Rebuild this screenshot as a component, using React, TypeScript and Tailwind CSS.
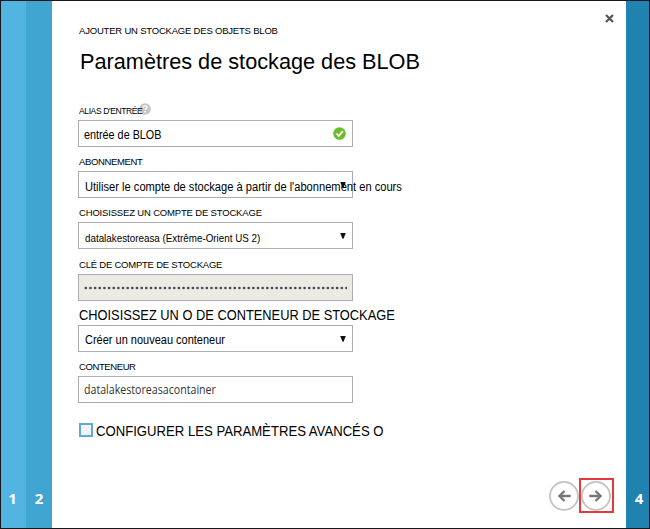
import type { ReactNode } from "react";

const arial = "font-['Liberation_Sans',Arial,sans-serif]";

function Field({ label, className, children }: { label: ReactNode; className: string; children: ReactNode }) {
  return (
    <div className={`flex flex-col justify-end ${className}`}>
      <div className="flex h-[14px] items-center whitespace-nowrap pl-px">{label}</div>
      <div className="mt-[2px]">{children}</div>
    </div>
  );
}

function Box({ className = "bg-white", children }: { className?: string; children: ReactNode }) {
  return (
    <div className={`flex h-[27px] w-[275px] items-center justify-between whitespace-nowrap border border-[#adadad] pl-[6px] pr-[5px] ${className}`}>
      {children}
    </div>
  );
}

function Arrow() {
  return (
    <svg className="mt-px mr-px h-[6px] w-[6px] shrink-0" viewBox="0 0 6 6">
      <path d="M.2 0h5.6L3.5 5.8h-1z" fill="#111" />
    </svg>
  );
}

function RoundArrow({ flip = false }: { flip?: boolean }) {
  return (
    <svg className={`h-[30px] w-[30px] shrink-0 ${flip ? "-scale-x-100" : ""}`} viewBox="0 0 30 30" fill="none">
      <circle cx="15" cy="15" r="14" stroke="#c6c6c6" strokeWidth="1.9" />
      <path d="M8.3 15h11M14.4 10l5.2 5-5.2 5" stroke="#777" strokeWidth="2.3" />
    </svg>
  );
}

export default function App() {
  return (
    <div className={`flex h-[529px] w-[650px] overflow-hidden border border-[#17171b] bg-white text-black ${arial}`}>
      <div className="flex w-[25px] items-end justify-center bg-[#52b5e1] pb-[19px] pr-[2px] font-['Open_Sans',sans-serif] text-[15px] leading-[22px] font-bold text-white">1</div>
      <div className="flex w-[26px] items-end justify-center bg-[#41a5d1] pb-[19px] font-['Open_Sans',sans-serif] text-[15px] leading-[22px] font-bold text-white">2</div>
      <main className="flex min-w-0 flex-1 flex-col pl-[26px]">
        <div className="flex h-[39px] justify-between pr-[12px]">
          <span className="mt-[23px] whitespace-nowrap pl-px text-[9.5px] leading-[14px] tracking-[-0.2px]">AJOUTER UN STOCKAGE DES OBJETS BLOB</span>
          <svg className="mt-[13px] h-[9px] w-[9px]" viewBox="0 0 9 9">
            <path d="M1 1l7 7M8 1l-7 7" stroke="#555" strokeWidth="2.2" />
          </svg>
        </div>
        <h1 className="h-[46px] whitespace-nowrap pl-[2px] pt-[9px] text-[21.7px] leading-[26px]">Paramètres de stockage des BLOB</h1>
        <Field
          className="h-[61px]"
          label={
            <>
              <span className="z-10 text-[8.5px] tracking-[-0.38px]">ALIAS D'ENTRÉE</span>
              <svg className="-ml-[3px] mt-[-5px] h-[12px] w-[12px]" viewBox="0 0 13 13">
                <circle cx="6.5" cy="6.5" r="6.3" fill="#c6c6c6" />
                <path d="M4.6 5q0-1.9 2-1.9t1.9 1.7q0 .9-1 1.5t-.9 1.3M6.6 8.7v1.6" stroke="#fff" strokeWidth="1.5" fill="none" />
              </svg>
            </>
          }
        >
          <Box>
            <span className="-ml-px mt-[3px] origin-left scale-x-[0.9] text-[12px]">entrée de BLOB</span>
            <svg className="mr-px h-[13px] w-[13px]" viewBox="0 0 13 13">
              <circle cx="6.5" cy="6.5" r="6.3" fill="#6bbd2d" />
              <path d="M3.4 6.5l2.4 2.5 4-4.8" stroke="#fff" strokeWidth="1.8" fill="none" />
            </svg>
          </Box>
        </Field>
        <Field className="h-[51px]" label={<span className="text-[9.5px] tracking-[-0.35px]">ABONNEMENT</span>}>
          <Box>
            <span className="mt-[4px] w-[254px] origin-left scale-x-[0.927] text-[12px]">Utiliser le compte de stockage à partir de l'abonnement en cours</span>
            <Arrow />
          </Box>
        </Field>
        <Field className="h-[51px]" label={<span className="text-[9.5px] tracking-[-0.17px]">CHOISISSEZ UN COMPTE DE STOCKAGE</span>}>
          <Box>
            <span className="mt-[5px] origin-left scale-x-[0.893] text-[11px]">datalakestoreasa (Extrême-Orient US 2)</span>
            <Arrow />
          </Box>
        </Field>
        <Field className="h-[52px]" label={<span className="text-[9.5px] tracking-[-0.22px]">CLÉ DE COMPTE DE STOCKAGE</span>}>
          <Box className="bg-[#ebebe4]">
            <svg className="-ml-px h-[4px] w-[263px] shrink-0" viewBox="0 0 263 4">
              <path d="M1.8 2H264" stroke="#484850" strokeWidth="2.7" strokeLinecap="round" strokeDasharray="0 4.655" />
            </svg>
          </Box>
        </Field>
        <Field className="h-[51px]" label={<span className="-mt-px origin-left scale-x-[0.917] text-[14px]">CHOISISSEZ UN O DE CONTENEUR DE STOCKAGE</span>}>
          <Box>
            <span className="mt-[3px] origin-left scale-x-[0.916] text-[12px]">Créer un nouveau conteneur</span>
            <Arrow />
          </Box>
        </Field>
        <Field className="h-[51px]" label={<span className="text-[9.5px] tracking-[-0.4px]">CONTENEUR</span>}>
          <Box>
            <span className="-ml-px origin-left scale-x-[0.886] font-['Open_Sans',sans-serif] text-[12px] text-[#333]">datalakestoreasacontainer</span>
          </Box>
        </Field>
        <div className="mt-[20px] flex h-[14px] items-center whitespace-nowrap pl-px">
          <span className="h-[14px] w-[14px] border-2 border-[#5eaad6] bg-[#f2f2f2]" />
          <span className="ml-[3px] mt-[2px] origin-left scale-x-[0.938] text-[14px]">CONFIGURER LES PARAMÈTRES AVANCÉS O</span>
        </div>
        <div className="mt-auto mb-[15px] flex items-center justify-end pr-[12px]">
          <RoundArrow flip />
          <div className="flex h-[35px] w-[35px] items-center justify-center border-2 border-[#e8393a] pr-px">
            <RoundArrow />
          </div>
        </div>
      </main>
      <div className="flex w-[23px] items-end justify-center bg-[#1f82af] pb-[19px] pl-[3px] font-['Open_Sans',sans-serif] text-[15px] leading-[22px] font-bold text-white">4</div>
    </div>
  );
}
